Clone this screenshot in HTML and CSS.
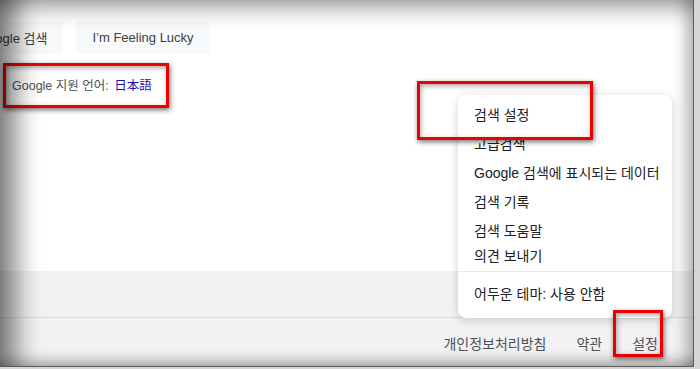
FILE: index.html
```html
<!DOCTYPE html>
<html lang="ko">

<head>
    <meta charset="UTF-8">
    <meta name="viewport" content="width=device-width, initial-scale=1.0">
    <title>Google</title>
    <link rel="stylesheet" href="styles.css">
</head>

<body>
    <div class="shot">
        <div class="main">
            <div class="buttons">
                <button class="btn">Google 검색</button>
                <button class="btn">I’m Feeling Lucky</button>
            </div>
            <div class="lang">Google 지원 언어: <a href="#">日本語</a></div>
        </div>
        <div class="country"></div>
        <div class="footer">
            <a href="#">개인정보처리방침</a>
            <a href="#">약관</a>
            <a href="#">설정</a>
        </div>

        <div class="menu">
            <div class="menu-group">
                <div class="item">검색 설정</div>
                <div class="item">고급검색</div>
                <div class="item">Google 검색에 표시되는 데이터</div>
                <div class="item">검색 기록</div>
                <div class="item">검색 도움말</div>
                <div class="item item-short">의견 보내기</div>
            </div>
            <div class="menu-group last">
                <div class="item">어두운 테마: 사용 안함</div>
            </div>
        </div>

        <div class="mark mark-lang"></div>
        <div class="mark mark-menu"></div>
        <div class="mark mark-footer"></div>
    </div>
</body>

</html>
```

FILE: styles.css
```css
body {
    margin: 0;
    width: 700px;
    height: 369px;
    overflow: hidden;
    background: #d6d6d6;
    font-family: Arial, "Liberation Sans", "Noto Sans CJK KR", sans-serif;
}

.shot {
    position: relative;
    width: 693px;
    height: 366px;
    background: #fff;
    border-right: 1px solid #5c5c5c;
    border-bottom: 1px solid #5c5c5c;
    display: flex;
    flex-direction: column;
    overflow: hidden;
}

/* darkened edges of the capture */
.shot::after {
    content: '';
    position: absolute;
    inset: 0;
    pointer-events: none;
    z-index: 10;
    box-shadow:
        inset 34px 0 26px -18px rgba(0, 0, 0, 0.5),
        inset 0 22px 20px -12px rgba(0, 0, 0, 0.32),
        inset -16px 0 14px -8px rgba(0, 0, 0, 0.25),
        inset 0 -14px 12px -8px rgba(0, 0, 0, 0.25);
}

.main {
    height: 271px;
}

.buttons {
    display: flex;
    gap: 13px;
    margin: 21px 0 0 -38px;
}

.btn {
    height: 33px;
    padding: 0 15px;
    border: 1px solid #f8f9fa;
    border-radius: 4px;
    background: #f8f9fa;
    color: #3c4043;
    font-family: inherit;
    font-size: 13px;
}

.lang {
    margin-top: 22px;
    padding-left: 12px;
    font-size: 12.5px;
    line-height: 20px;
    color: #4d5156;
}

.lang a {
    color: #1a0dab;
    text-decoration: none;
    margin-left: 2px;
}

.country {
    height: 46px;
    background: #f2f2f2;
    border-bottom: 1px solid #dadce0;
}

.footer {
    flex: 1;
    background: #f2f2f2;
    display: flex;
    justify-content: flex-end;
    align-items: center;
    padding-right: 20px;
    padding-top: 2px;
}

.footer a {
    padding: 0 15px;
    font-size: 14px;
    color: #4d5156;
    text-decoration: none;
}

.menu {
    position: absolute;
    left: 458px;
    top: 95px;
    width: 214px;
    background: #fff;
    border-radius: 8px;
    box-shadow: 0 2px 10px rgba(0, 0, 0, 0.18);
    z-index: 5;
}

.menu-group {
    padding: 6px 0 5px;
    border-bottom: 1px solid #e8eaed;
}

.menu-group.last {
    padding: 8px 0 9px;
    border-bottom: none;
}

.item {
    padding: 0 16px;
    font-size: 14px;
    line-height: 29px;
    color: #202124;
    white-space: nowrap;
}

.item-short {
    line-height: 20px;
}

.mark {
    position: absolute;
    border: 3px solid #ee0000;
    box-shadow: 1px 2px 5px rgba(0, 0, 0, 0.55), inset 1px 2px 5px rgba(0, 0, 0, 0.35);
    z-index: 8;
}

.mark-lang {
    left: 3px;
    top: 63px;
    width: 160px;
    height: 39px;
}

.mark-menu {
    left: 417px;
    top: 81px;
    width: 170px;
    height: 53px;
}

.mark-footer {
    left: 613px;
    top: 310px;
    width: 44px;
    height: 41px;
}
```
